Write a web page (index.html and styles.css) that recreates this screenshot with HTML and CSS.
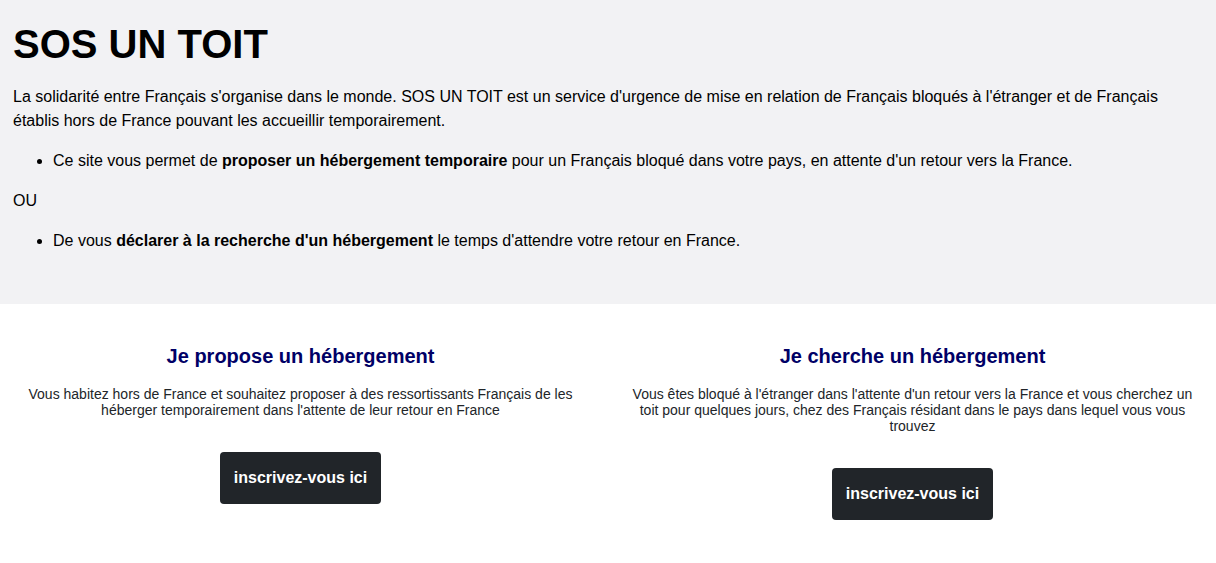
FILE: index.html
```html
<!DOCTYPE html>
<html lang="fr">
<head>
    <meta charset="UTF-8">
    <meta name="viewport" content="width=device-width, initial-scale=1.0">
    <title>SOS UN TOIT</title>
    <link rel="stylesheet" href="styles.css">
</head>
<body>
    <!-- Présentation -->
    <header class="intro">
        <h1>SOS UN TOIT</h1>
        <p>La solidarité entre Français s'organise dans le monde. SOS UN TOIT est un service d'urgence de mise en relation de Français bloqués à l'étranger et de Français établis hors de France pouvant les accueillir temporairement.</p>
        <ul>
            <li>Ce site vous permet de <strong>proposer un hébergement temporaire</strong> pour un Français bloqué dans votre pays, en attente d'un retour vers la France.</li>
        </ul>
        <p>OU</p>
        <ul>
            <li>De vous <strong>déclarer à la recherche d'un hébergement</strong> le temps d'attendre votre retour en France.</li>
        </ul>
    </header>

    <!-- Les deux choix -->
    <section class="choices">
        <div class="choice">
            <h2>Je propose un hébergement</h2>
            <p>Vous habitez hors de France et souhaitez proposer à des ressortissants Français de les héberger temporairement dans l'attente de leur retour en France</p>
            <a class="btn" href="#">inscrivez-vous ici</a>
        </div>
        <div class="choice">
            <h2>Je cherche un hébergement</h2>
            <p>Vous êtes bloqué à l'étranger dans l'attente d'un retour vers la France et vous cherchez un toit pour quelques jours, chez des Français résidant dans le pays dans lequel vous vous trouvez</p>
            <a class="btn" href="#">inscrivez-vous ici</a>
        </div>
    </section>
</body>
</html>
```

FILE: styles.css
```css
body {
    font-family: "Liberation Sans", Arial, sans-serif;
    font-size: 16px;
    line-height: 24px;
    color: #000;
    background-color: #fff;
    margin: 0;
}

/* Bloc de présentation */
.intro {
    background-color: #f2f2f4;
    padding: 20px 13px 35px;
}

.intro h1 {
    font-size: 40px;
    line-height: 48px;
    margin: 0 0 17px;
}

.intro p {
    margin: 0 0 16px;
}

.intro ul {
    margin: 0 0 16px;
    padding-left: 40px;
}

/* Colonnes */
.choices {
    display: grid;
    grid-template-columns: 1fr 1fr;
    gap: 11px;
    padding: 40px 3px 40px 0;
}

.choice {
    text-align: center;
    padding: 0 10px;
}

.choice h2 {
    color: #000066;
    font-size: 20px;
    line-height: 24px;
    margin: 0 0 18px;
}

.choice p {
    color: #212529;
    font-size: 14px;
    line-height: 16px;
    margin: 0 0 34px;
}

.btn {
    display: inline-block;
    background-color: #212529;
    color: #fff;
    font-weight: bold;
    text-decoration: none;
    padding: 14px 14px;
    border-radius: 4px;
}
```
